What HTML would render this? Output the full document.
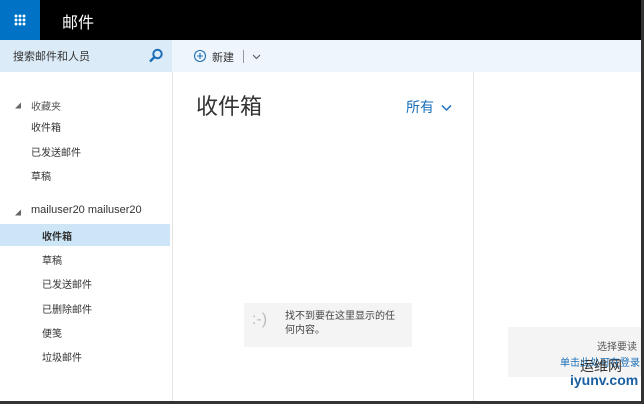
<!DOCTYPE html><html><head><meta charset="utf-8"><style>
*{margin:0;padding:0;box-sizing:border-box}
body{width:644px;height:404px;overflow:hidden;background:#fff;font-family:"Liberation Sans","Noto Sans CJK SC",sans-serif;position:relative;color:#333}
.a{position:absolute}
.n{position:absolute;font-size:10px;color:#333;left:31px}
.s{left:42px}
</style></head><body>
<div class="a" style="left:0;top:0;width:644px;height:40px;background:#000"></div>
<div class="a" style="left:0;top:0;width:40px;height:40px;background:#0072c6"></div>
<div class="a" style="left:14px;top:14px;width:12px;height:12px;background:
radial-gradient(circle,#fff 1.3px,transparent 1.6px) 0 0/4px 4px"></div>
<div class="a" style="left:62px;top:9px;color:#fff;font-size:16px">邮件</div>
<div class="a" style="left:0;top:40px;width:172px;height:32px;background:#dcebf8"></div>
<div class="a" style="left:172px;top:40px;width:472px;height:32px;background:#eef5fc"></div>
<div class="a" style="left:13px;top:48px;font-size:11px;color:#333">搜索邮件和人员</div>
<svg class="a" style="left:148px;top:48px" width="16" height="16"><circle cx="9.5" cy="6" r="4.2" fill="none" stroke="#1a6fb8" stroke-width="2"/><line x1="6.5" y1="9" x2="2" y2="13.5" stroke="#1a6fb8" stroke-width="2.4"/></svg>
<svg class="a" style="left:193px;top:49px" width="14" height="14"><circle cx="7" cy="7" r="5.5" fill="none" stroke="#1a6fb8" stroke-width="1.1"/><path d="M7 4v6M4 7h6" stroke="#1a6fb8" stroke-width="1.1"/></svg>
<div class="a" style="left:212px;top:49px;font-size:11px">新建</div>
<div class="a" style="left:243px;top:50px;width:1px;height:13px;background:#999"></div>
<svg class="a" style="left:252px;top:54px" width="9" height="6"><path d="M1 1l3.5 3.5L8 1" fill="none" stroke="#555" stroke-width="1.1"/></svg>
<div class="a" style="left:172px;top:72px;width:1px;height:332px;background:#e4e4e4"></div>
<div class="a" style="left:473px;top:72px;width:1px;height:332px;background:#e4e4e4"></div>
<div class="a" style="left:15px;top:101px;font-size:6px;color:#666">◢</div>
<div class="n" style="top:98px;color:#555">收藏夹</div>
<div class="n" style="top:119px">收件箱</div>
<div class="n" style="top:144px">已发送邮件</div>
<div class="n" style="top:168px">草稿</div>
<div class="a" style="left:15px;top:208px;font-size:6px;color:#666">◢</div>
<div class="n" style="top:204px;font-size:11px">mailuser20 mailuser20</div>
<div class="a" style="left:0;top:224px;width:170px;height:22px;background:#cde6f7"></div>
<div class="n s" style="top:228px;font-weight:bold">收件箱</div>
<div class="n s" style="top:252px">草稿</div>
<div class="n s" style="top:276px">已发送邮件</div>
<div class="n s" style="top:301px">已删除邮件</div>
<div class="n s" style="top:325px">便笺</div>
<div class="n s" style="top:349px">垃圾邮件</div>
<div class="a" style="left:196px;top:89px;font-size:22px;color:#333">收件箱</div>
<div class="a" style="left:406px;top:97px;font-size:14px;color:#1a6fb8">所有</div>
<svg class="a" style="left:441px;top:104px" width="11" height="8"><path d="M1 1.5l4.5 4.5L10 1.5" fill="none" stroke="#1a6fb8" stroke-width="1.5"/></svg>
<div class="a" style="left:244px;top:303px;width:168px;height:44px;background:#f4f4f4"></div>
<div class="a" style="left:252px;top:311px;font-size:16px;color:#bbb">:-)</div>
<div class="a" style="left:285px;top:310px;font-size:10px;line-height:14px;width:118px;color:#444">找不到要在这里显示的任何内容。</div>
<div class="a" style="left:508px;top:327px;width:136px;height:50px;background:#f4f4f4"></div>
<div class="a" style="left:597px;top:338px;font-size:10px;color:#555">选择要读</div>
<div class="a" style="left:560px;top:354px;font-size:10px;color:#1a6fb8">单击此处可在登录</div>
<div class="a" style="left:570px;top:372px;font-size:14px;font-weight:bold;color:#1a5fa0">iyunv.com</div>
<div class="a" style="left:580px;top:356px;font-size:14px;color:#333">运维网</div>
<div class="a" style="left:641px;top:0;width:3px;height:404px;background:#333"></div>
<div class="a" style="left:0;top:401px;width:644px;height:3px;background:#333"></div>
</body></html>
